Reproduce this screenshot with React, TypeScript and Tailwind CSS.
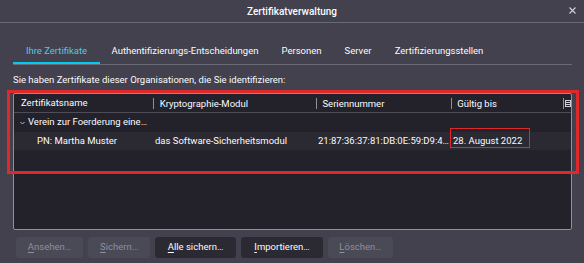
import React from 'react';

const tabs: [string, string][] = [
  ['Ihre Zertifikate', 'w-[87px]'],
  ['Authentifizierungs-Entscheidungen', 'w-[170px]'],
  ['Personen', 'w-[63px]'],
  ['Server', 'w-[50px]'],
  ['Zertifizierungsstellen', 'w-[112px]'],
];

const Btn = ({ first, label, w, disabled }: { first: string; label: string; w: string; disabled?: boolean }) => (
  <div
    className={`${w} h-[21px] rounded-[3px] flex items-center justify-center ${
      disabled ? 'bg-[#4a4956] text-[#8f8f9d]' : 'bg-[#2b2a33] text-[#fbfbfe]'
    }`}
  >
    <span className="underline underline-offset-[2px]">{first}</span>
    <span>{label}</span>
  </div>
);

export default function App() {
  return (
    <div
      className="relative w-[584px] h-[263px] bg-[#42414d] text-[#fbfbfe] text-[9.5px] overflow-hidden flex flex-col"
      style={{ fontFamily: 'Roboto, "Noto Sans", sans-serif' }}
    >
      {/* title bar */}
      <div className="h-[23px] shrink-0 border-b border-[#6a6976] flex items-center justify-center relative">
        <span className="text-[10px] font-medium">Zertifikatverwaltung</span>
        <svg className="absolute left-[569px] top-[7px]" width="7" height="7" viewBox="0 0 7 7">
          <path d="M0.5 0.5L6.5 6.5M6.5 0.5L0.5 6.5" stroke="#d0d0da" strokeWidth="1.1" />
        </svg>
      </div>

      <div className="pl-[13px] pr-[12px] pt-[16px] flex flex-col">
        {/* tabs */}
        <div className="flex h-[26px] border-b border-[#6a6976]">
          {tabs.map(([t, w], i) => (
            <div
              key={t}
              className={`${w} flex items-center justify-center ${
                i === 0 ? 'text-[#54c7e3] border-b-2 border-[#00ccf0] pt-[2px]' : ''
              }`}
            >
              {t}
            </div>
          ))}
        </div>

        <div className="mt-[8px] h-[14px] leading-[14px]">
          Sie haben Zertifikate dieser Organisationen, die Sie identifizieren:
        </div>

        {/* certificate tree */}
        <div className="mt-[6px] h-[137px] bg-[#23222b] border border-[#8f8f9d] rounded-[2px] flex flex-col">
          <div className="flex h-[19px] items-center border-b border-[#4d4c58] shrink-0">
            <div className="w-[139px] pl-[7px]">Zertifikatsname</div>
            <div className="w-[164px] pl-[6px] border-l border-[#8f8f9d] leading-[11px]">Kryptographie-Modul</div>
            <div className="w-[135px] pl-[5px] border-l border-[#8f8f9d] leading-[11px]">Seriennummer</div>
            <div className="w-[112px] pl-[5px] border-l border-[#8f8f9d] leading-[11px]">Gültig bis</div>
            <div className="border-l border-[#8f8f9d] h-[11px] pl-[1px] flex items-center">
              <svg width="6" height="7" viewBox="0 0 6 7">
                <rect x="0.5" y="0.5" width="5" height="6" fill="none" stroke="#cfcfd8" />
                <path d="M1 2.5H5M1 4.5H5" stroke="#cfcfd8" />
              </svg>
            </div>
          </div>
          <div className="flex h-[19px] items-center shrink-0">
            <div className="pl-[6px] flex items-center gap-[3px]">
              <svg width="5" height="4" viewBox="0 0 5 4">
                <path d="M0.5 1L2.5 3L4.5 1" fill="none" stroke="#b8b8c4" />
              </svg>
              <span>Verein zur Foerderung eine…</span>
            </div>
          </div>
          <div className="flex h-[18px] items-center bg-[#2b2a33] shrink-0">
            <div className="w-[139px] pl-[23px]">PN: Martha Muster</div>
            <div className="w-[164px] pl-[2px]">das Software-Sicherheitsmodul</div>
            <div className="w-[135px] pl-[1px]">21:87:36:37:81:DB:0E:59:D9:4…</div>
            <div className="relative w-[112px] pl-[1px]">
              28. August 2022
              <div className="absolute left-[-2px] top-[-6px] w-[80px] h-[20px] border border-[#e0282b]" />
            </div>
          </div>
        </div>

        {/* buttons */}
        <div className="flex gap-[5px] mt-[7px] pl-[3px]">
          <Btn first="A" label="nsehen…" w="w-[67px]" disabled />
          <Btn first="S" label="ichern…" w="w-[62px]" disabled />
          <Btn first="A" label="lle sichern…" w="w-[81px]" />
          <Btn first="I" label="mportieren…" w="w-[82px]" />
          <Btn first="L" label="öschen…" w="w-[65px]" disabled />
        </div>
      </div>

      {/* red highlight around the list */}
      <div className="absolute left-[7px] top-[90px] w-[572px] h-[84px] border-[3px] border-[#e0282b] pointer-events-none" />
    </div>
  );
}
